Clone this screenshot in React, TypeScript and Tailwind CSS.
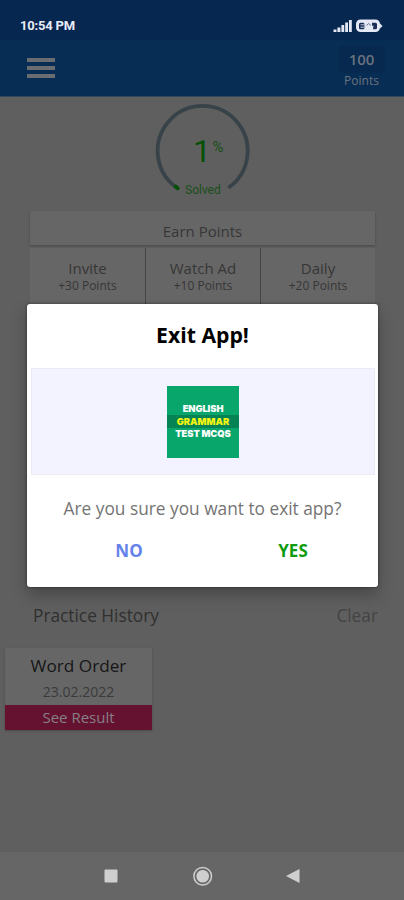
const rewards = [
  { title: "Invite", points: "+30 Points" },
  { title: "Watch Ad", points: "+10 Points" },
  { title: "Daily", points: "+20 Points" },
];

function StatusBar() {
  return (
    <div className="flex h-10 items-center justify-between bg-[#06274f] pt-[11px] pr-[21px] pl-5 text-white">
      <span className="font-[Roboto] text-[13px] leading-4 font-bold tracking-[-0.2px] text-[#e8ecf8]">
        10:54 PM
      </span>
      <svg width="51" height="16" viewBox="0 0 51 16" fill="#e4e8f4">
        <rect x="1.5" y="11.5" width="3" height="2.5" />
        <rect x="5.4" y="9.5" width="3" height="4.5" />
        <rect x="9.4" y="7" width="2.8" height="7" />
        <rect x="13.2" y="4.5" width="2.8" height="9.5" />
        <rect x="17" y="2" width="2.8" height="12" />
        <rect x="24" y="1.5" width="24" height="12.5" rx="4.5" />
        <path d="M48 5.5l2.5 2.5-2.5 2.5z" />
        <rect x="27" y="4.8" width="5.5" height="6.4" rx="1.5" fill="#1b2c5a" />
        <path d="M28.5 6.8h5M28.5 9.2h5" stroke="#c4cade" strokeWidth="1" />
        <path d="M34.5 7.5l2.2-2 2.2 2" stroke="#67718f" strokeWidth="1" fill="none" />
        <path d="M40 4.8h3.5a1.5 1.5 0 0 1 1.5 1.5v3.4a1.5 1.5 0 0 1-1.5 1.5H41l.5-3.4H40z" fill="#1b2c5a" />
      </svg>
    </div>
  );
}

function AppBar() {
  return (
    <header className="flex h-[57px] items-start justify-between border-b border-[#31475d] bg-[#082d54] pr-[19px] pl-[27px]">
      <div className="mt-[18px] flex w-7 flex-col gap-1">
        <span className="h-1 bg-[#6b6e70]" />
        <span className="h-1 bg-[#6b6e70]" />
        <span className="h-1 bg-[#6b6e70]" />
      </div>
      <div className="mt-[6px] w-[47px] text-center text-[#68727e]">
        <div className="rounded-sm bg-[#07294f] text-[15px] leading-[27px] font-semibold">100</div>
        <div className="mt-px text-[12px] leading-[14px]">Points</div>
      </div>
    </header>
  );
}

function ProgressRing() {
  return (
    <svg className="mx-auto block" width="110" height="114" viewBox="0 0 110 114">
      <path
        d="M30.2 91A45 45 0 1 1 81.4 90.8"
        fill="none"
        stroke="#384349"
        strokeWidth="3.8"
      />
      <path d="M28.6 89.6L30.6 91.2" stroke="#064f08" strokeWidth="4" strokeLinecap="round" />
      <text x="46" y="65" fontFamily="Roboto" fontSize="32" fill="#075007">1</text>
      <text x="65.5" y="55" fontFamily="Roboto" fontSize="15" fill="#165016">%</text>
      <text x="38" y="96.5" fontFamily="Roboto" fontSize="12" fill="#195019">Solved</text>
    </svg>
  );
}

function EarnPoints() {
  return (
    <section className="mr-[29px] ml-[30px] text-center text-[#363636]">
      <div className="h-[34px] bg-[#666] text-[15px] leading-[40px] shadow-[0_1px_2px_#4a4a4a]">
        Earn Points
      </div>
      <div className="mt-[3px] grid h-[90px] grid-cols-[115px_114px_1fr] gap-px bg-[#454545]">
        {rewards.map((reward) => (
          <div key={reward.title} className="bg-[#666] pt-[10px]">
            <div className="text-[15px] leading-5">{reward.title}</div>
            <div className="text-[12px] leading-4">{reward.points}</div>
          </div>
        ))}
      </div>
    </section>
  );
}

function History() {
  return (
    <section className="mt-[266px]">
      <div className="flex justify-between pr-[26px] pl-[33px] text-[17.3px] leading-6">
        <h2 className="text-[#303030]">Practice History</h2>
        <span className="text-[#444]">Clear</span>
      </div>
      <div className="mt-5 ml-[5px] w-[147px] bg-[#666] text-center shadow-[0_1px_2px_#4a4a4a]">
        <div className="pt-1.5 text-[17.2px] leading-6 text-[#161616]">Word Order</div>
        <div className="pt-1 pb-[3px] text-[14px] leading-5 text-[#3a3a3a]">23.02.2022</div>
        <div className="h-[25px] bg-[#651230] text-[15px] leading-[25px] text-[#858085]">
          See Result
        </div>
      </div>
    </section>
  );
}

function NavBar() {
  return (
    <nav className="mt-auto h-12 bg-[#666]">
      <svg width="404" height="48" viewBox="0 0 404 48" fill="#cfcfcf">
        <rect x="104.5" y="17.5" width="13" height="13" rx="1" />
        <circle cx="202.7" cy="24.2" r="8.8" fill="none" stroke="#cfcfcf" strokeWidth="1.5" />
        <circle cx="202.7" cy="24.2" r="6.3" />
        <path d="M299.5 17v14L286 24z" />
      </svg>
    </nav>
  );
}

function AppLogo() {
  return (
    <div className="flex h-[72px] w-[72px] flex-col justify-center bg-[#08a66b] text-center font-[Inter] text-[9.4px] font-black text-white">
      <div className="leading-3 tracking-[-0.1px]">ENGLISH</div>
      <div className="bg-[#058354] leading-[13px] text-[#f5f511]">GRAMMAR</div>
      <div className="leading-3 tracking-[-0.1px]">TEST MCQS</div>
    </div>
  );
}

function ExitDialog() {
  return (
    <div
      role="dialog"
      className="absolute top-[304px] left-[27px] h-[283px] w-[351px] rounded-[3px] bg-white text-center shadow-[0_8px_16px_rgba(0,0,0,0.25),0_0_3px_rgba(0,0,0,0.5)]"
    >
      <h1 className="h-16 text-[21.2px] leading-[61px] font-bold text-black">Exit App!</h1>
      <div className="mr-[3px] ml-1 flex h-[107px] items-center justify-center border border-[#ebebf5] bg-[#f2f3ff]">
        <AppLogo />
      </div>
      <p className="mt-[22px] text-[17.3px] leading-6 text-[#747474]">
        Are you sure you want to exit app?
      </p>
      <div className="mt-[18px] flex pl-5 text-[17px] leading-6 font-bold">
        <button className="w-[164px] text-[#6482ea]">NO</button>
        <button className="w-[164px] text-[#109c10]">YES</button>
      </div>
    </div>
  );
}

export default function App() {
  return (
    <div className="relative flex h-[900px] w-[404px] flex-col overflow-hidden bg-[#5f5f5f] font-['Open_Sans',sans-serif]">
      <StatusBar />
      <AppBar />
      <ProgressRing />
      <EarnPoints />
      <History />
      <NavBar />
      <ExitDialog />
    </div>
  );
}
